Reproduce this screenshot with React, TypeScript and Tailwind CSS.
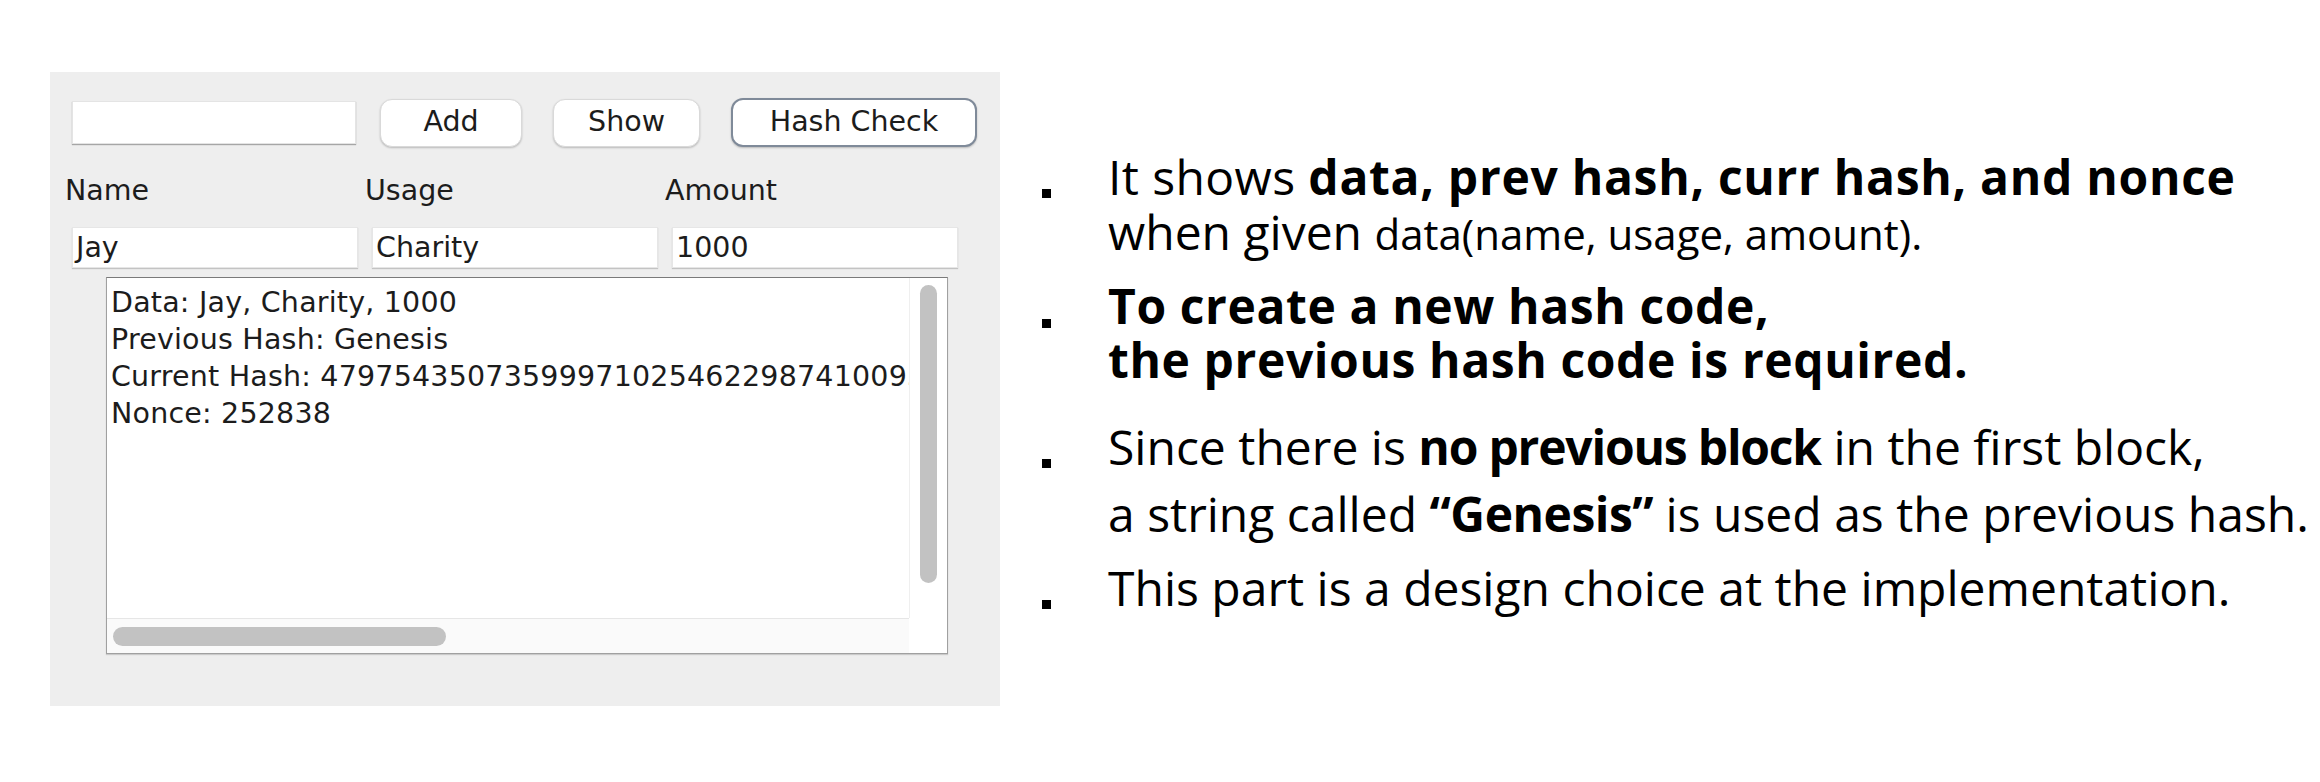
import React from 'react';

const swingFont = "font-['DejaVu_Sans',sans-serif] text-[28.5px] text-[#1c1c1c]";

const MacButton: React.FC<{ label: string; className?: string }> = ({ label, className = '' }) => (
  <button
    type="button"
    className={`flex items-center justify-center bg-white rounded-[12px] shadow-[0_1px_2px_rgba(0,0,0,0.22)] ${swingFont} ${className}`}
  >
    {label}
  </button>
);

const TextField: React.FC<{ value?: string }> = ({ value = '' }) => (
  <div className={`h-[41px] bg-white border border-[#e6e6e6] shadow-[0_1px_1px_rgba(0,0,0,0.18)] pl-[3px] leading-[40px] ${swingFont}`}>
    {value}
  </div>
);

const Bullet: React.FC<{ offset: string }> = ({ offset }) => (
  <div className="w-[66px] shrink-0">
    <div className={`w-[9px] h-[9px] bg-black ${offset}`} />
  </div>
);

export default function App() {
  return (
    <div className="flex w-[2320px] h-[782px] bg-white overflow-hidden">
      {/* Swing window */}
      <div className="ml-[50px] mt-[72px] w-[950px] h-[634px] shrink-0 bg-[#eeeeee]">
        <div className="flex items-center pt-[26px] pl-[22px]">
          <div className="w-[284px] h-[43px] bg-white border border-[#e4e4e4] shadow-[0_1px_1px_rgba(0,0,0,0.3)]" />
          <MacButton label="Add" className="ml-[24px] w-[142px] h-[48px] border border-[#d9d9d9]" />
          <MacButton label="Show" className="ml-[31px] w-[147px] h-[48px] border border-[#d9d9d9]" />
          <MacButton label="Hash Check" className="ml-[31px] w-[246px] h-[49px] border-2 border-[#7f8a99]" />
        </div>

        <div className="grid grid-cols-[286px_286px_286px] gap-x-[14px] gap-y-[19px] pl-[22px] mt-[27px]">
          <div className={`-ml-[7px] h-[34px] leading-[34px] ${swingFont}`}>Name</div>
          <div className={`-ml-[7px] h-[34px] leading-[34px] ${swingFont}`}>Usage</div>
          <div className={`-ml-[7px] h-[34px] leading-[34px] ${swingFont}`}>Amount</div>
          <TextField value="Jay" />
          <TextField value="Charity" />
          <TextField value="1000" />
        </div>

        <div className="ml-[56px] mt-[9px] w-[842px] h-[377px] flex flex-col bg-white border border-[#a0a0a0] border-t-[#7a7a7a] shadow-[0_1px_1px_rgba(0,0,0,0.15)]">
          <div className="flex h-[340px]">
            <div className={`w-[802px] overflow-hidden whitespace-pre pl-[4px] pt-[6px] leading-[37px] tracking-[0.2px] ${swingFont}`}>
              <div>Data: Jay, Charity, 1000</div>
              <div>Previous Hash: Genesis</div>
              <div>Current Hash: 47975435073599971025462298741009317640</div>
              <div>Nonce: 252838</div>
            </div>
            <div className="w-[38px] border-l border-[#efefef] bg-white">
              <div className="mt-[7px] mx-auto w-[17px] h-[298px] rounded-full bg-[#c2c2c2]" />
            </div>
          </div>
          <div className="flex h-[35px]">
            <div className="w-[802px] bg-[#fafafa] border-t border-[#e6e6e6]">
              <div className="ml-[6px] mt-[8px] w-[333px] h-[19px] rounded-full bg-[#c2c2c2]" />
            </div>
            <div className="w-[38px] bg-white" />
          </div>
        </div>
      </div>

      {/* Slide notes */}
      <div className="ml-[42px] mt-[149px] flex flex-col font-['Open_Sans',sans-serif] text-[48px] text-black whitespace-nowrap">
        <div className="flex leading-[55px]">
          <Bullet offset="mt-[40px]" />
          <div>
            <div>
              <span className="tracking-[0.4px]">It shows </span>
              <b className="font-bold tracking-[0.7px]">data, prev hash, curr hash, and nonce</b>
            </div>
            <div>
              when given <span className="text-[42px]">data(name, usage, amount).</span>
            </div>
          </div>
        </div>

        <div className="flex mt-[18px] leading-[54px] font-bold tracking-[0.6px]">
          <Bullet offset="mt-[40px]" />
          <div>
            <div>To create a new hash code,</div>
            <div>the previous hash code is required.</div>
          </div>
        </div>

        <div className="flex mt-[26px] leading-[67px]">
          <Bullet offset="mt-[46px]" />
          <div>
            <div>
              Since there is <b className="font-bold tracking-[-1.2px]">no previous block</b> in the first block,
            </div>
            <div>
              a string called <b className="font-bold tracking-[-0.5px]">“Genesis”</b> is used as the previous hash.
            </div>
          </div>
        </div>

        <div className="flex mt-[7px] leading-[67px]">
          <Bullet offset="mt-[46px]" />
          <div>This part is a design choice at the implementation.</div>
        </div>
      </div>
    </div>
  );
}
